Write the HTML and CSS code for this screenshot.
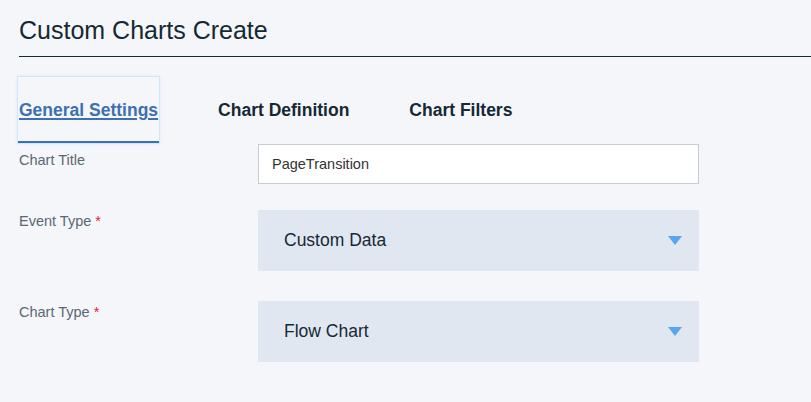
FILE: index.html
```html
<!DOCTYPE html>
<html lang="en">
<head>
<meta charset="utf-8">
<title>Custom Charts Create</title>
<link rel="stylesheet" href="styles.css">
</head>
<body>
  <header class="page-header">
    <h1 class="page-title">Custom Charts Create</h1>
  </header>

  <nav class="tabs">
    <a class="tab tab-active" href="#">General Settings</a>
    <a class="tab" href="#">Chart Definition</a>
    <a class="tab" href="#">Chart Filters</a>
  </nav>

  <form class="form">
    <div class="row row-title">
      <label class="label label-input">Chart Title</label>
      <div class="text-input">PageTransition</div>
    </div>
    <div class="row row-event">
      <label class="label">Event Type <span class="req">*</span></label>
      <div class="select">
        <span class="select-value">Custom Data</span>
        <span class="caret"></span>
      </div>
    </div>
    <div class="row">
      <label class="label">Chart Type <span class="req">*</span></label>
      <div class="select">
        <span class="select-value">Flow Chart</span>
        <span class="caret"></span>
      </div>
    </div>
  </form>
</body>
</html>
```

FILE: styles.css
```css
* {
  box-sizing: border-box;
}

html, body {
  margin: 0;
  padding: 0;
  background: #f4f6fa;
}

body {
  padding: 15px 0 0 19px;
  font-family: Arial, "Liberation Sans", Helvetica, sans-serif;
  color: #152935;
  overflow: hidden;
}

.page-header {
  padding-bottom: 11px;
  border-bottom: 1px solid #152935;
}

.page-title {
  margin: 0;
  font-size: 25px;
  font-weight: 400;
  line-height: 30px;
  color: #152935;
}

.tabs {
  display: flex;
  gap: 58px;
  margin-top: 20px;
  margin-left: -1px;
}

.tab {
  display: block;
  padding: 23px 1px 21px;
  line-height: 20px;
  font-size: 17.5px;
  font-weight: 700;
  color: #152935;
  text-decoration: none;
  border-bottom: 2px solid transparent;
}

.tab-active {
  color: #3d70b2;
  text-decoration: underline;
  text-decoration-thickness: 2px;
  text-underline-offset: 2px;
  border-bottom-color: #3d70b2;
  box-shadow: 0 0 0 1px #cfe7fb, 0 0 3px 1px #dcedfc;
}

.form {
  margin-top: 1px;
}

.row {
  display: flex;
  align-items: flex-start;
}

.row-title {
  margin-bottom: 26px;
}

.row-event {
  margin-bottom: 30px;
}

.label {
  width: 239px;
  flex: none;
  padding-top: 1px;
  font-size: 14.5px;
  line-height: 20px;
  color: #5a6872;
}

.label-input {
  padding-top: 6px;
}

.req {
  color: #e71d32;
}

.text-input {
  width: 441px;
  height: 40px;
  padding: 0 13px;
  background: #ffffff;
  border: 1px solid #c7ced3;
  font-size: 14.5px;
  line-height: 38px;
  color: #333333;
}

.select {
  width: 441px;
  height: 61px;
  display: flex;
  align-items: center;
  justify-content: space-between;
  padding: 0 17px 0 26px;
  background: #e0e7f1;
}

.select-value {
  font-size: 17.5px;
  color: #152935;
}

.caret {
  width: 0;
  height: 0;
  border-left: 7px solid transparent;
  border-right: 7px solid transparent;
  border-top: 9px solid #5aa5f3;
  margin-top: -1px;
}
```
